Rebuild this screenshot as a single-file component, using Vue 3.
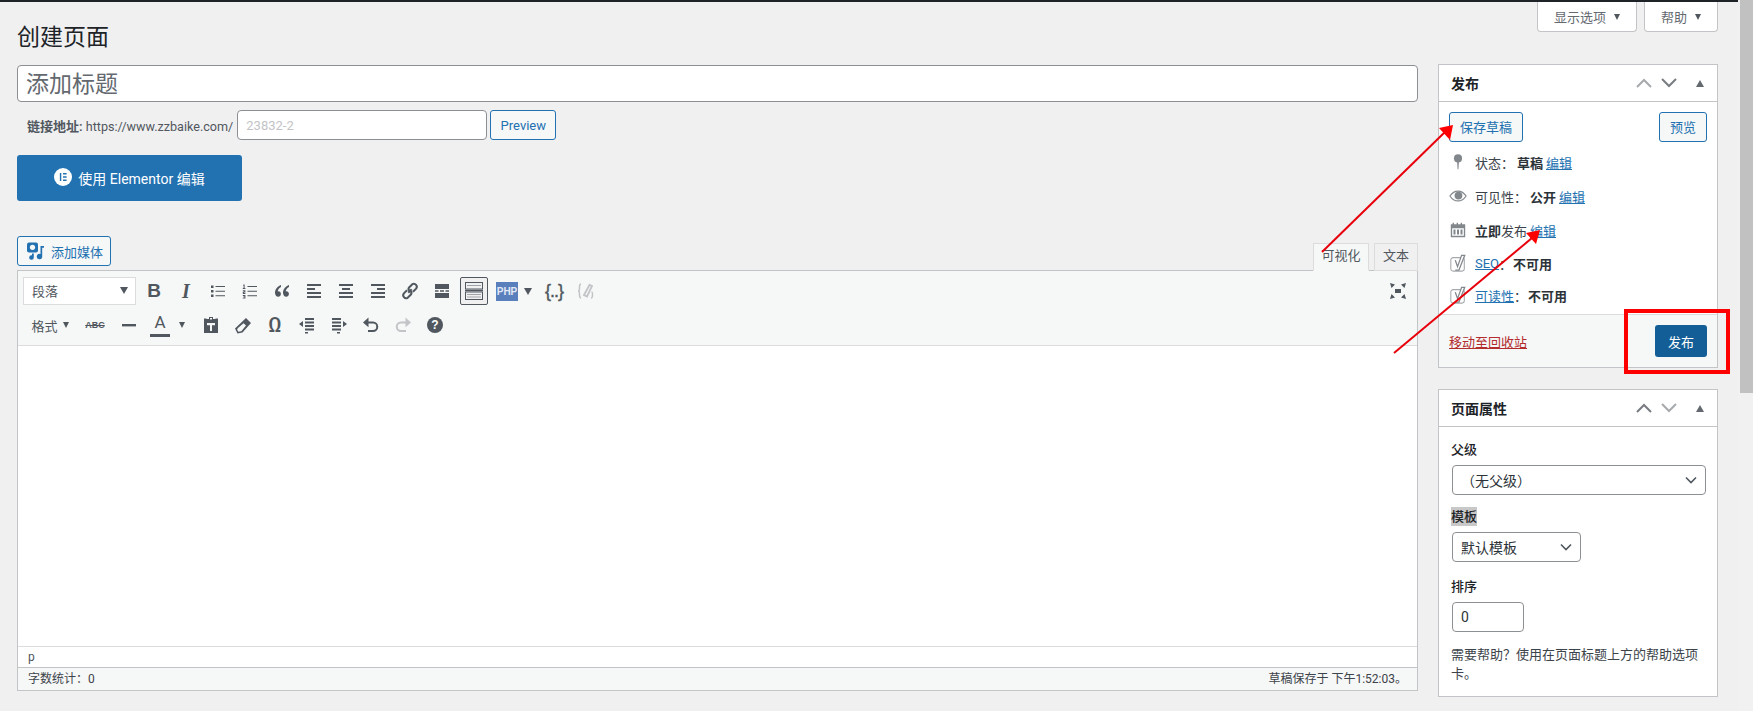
<script setup>
const rowOne = [
  { key: 'bullet', d: 'M3 4.500h2.500v2.500H3zM3 9h2.500v2.500H3zM3 13.500h2.500V16H3zM7.500 5h9.500v1H7.500zM7.500 9.700h9.500v1H7.500zM7.500 14.200h9.500v1H7.500z' },
  { key: 'num', d: 'M7.500 5h9.500v1H7.500zM7.500 9.700h9.500v1H7.500zM7.500 14.200h9.500v1H7.500zM3.400 3.400h1.200v3.600H5.400V8H2.800V7h.8V4.400h-.6zM2.800 9.300h2.600v2.200H4v.6h1.400V13H2.800v-2.200h1.400v-.6H2.800zM2.800 14h2.600v3.600H2.800v-.9h1.600v-.5H3.300v-.8h1.100v-.5H2.800z' },
  { key: 'quote', d: 'M9 4C5.800 5.200 3 8 3 11.800c0 2.400 1.300 3.900 3.100 3.900 1.600 0 2.800-1.200 2.800-2.800s-1.100-2.700-2.500-2.700c-.3 0-.5 0-.7.1.3-1.700 1.600-3.200 3.300-4.200zM17 4c-3.200 1.200-6 4-6 7.800 0 2.400 1.300 3.900 3.100 3.900 1.600 0 2.800-1.200 2.800-2.800s-1.100-2.700-2.500-2.700c-.3 0-.5 0-.7.1.3-1.700 1.600-3.200 3.300-4.200z' },
  { key: 'left', d: 'M3 3h14v2H3zM3 7h8v2H3zM3 11h14v2H3zM3 15h14v2H3z' },
  { key: 'center', d: 'M3 3h14v2H3zM6 7h8v2H6zM3 11h14v2H3zM3 15h14v2H3z' },
  { key: 'right', d: 'M3 3h14v2H3zM9 7h8v2H9zM3 11h14v2H3zM3 15h14v2H3z' },
  { key: 'link', stroke: 'M8.300 11.700l3.400-3.400M7 9.200l-3.100 3.100a3 3 0 0 0 3.800 4.500l3-3a3 3 0 0 0 0-3.900M13 10.800l3.100-3.100a3 3 0 0 0-3.800-4.500l-3 3a3 3 0 0 0 0 3.900' },
  { key: 'more', d: 'M3 3h14v5H3zM3 9.300h3.500v1.400H3zM8 9.300h4v1.400H8zM13.500 9.300H17v1.400h-3.500zM3 12h14v5H3z' },
]

const rowTwo = [
  { key: 'hr', d: 'M3 9h14v2.400H3z', shift: true },
  { key: 'color' },
  { key: 'paste', d: 'M8 2h4v2h2.500V3.400H17V18H3V3.400h2.500V4H8zM9 3v1.500h2V3zM6 8v2.200h3V16h2v-5.800h3V8z' },
  { key: 'eraser', d: 'M13 3l5 5-8.500 9.500-5 1-2.500-5zM5 13l-.9 1.600 1.200 2.200 3-.6L13 10.600l-2.400-2.400z' },
  { key: 'omega' },
  { key: 'outdent', d: 'M8 3h9v2H8zM8 6.500h9v2H8zM8 10h9v2H8zM8 13.500h9v2H8zM8 17h3v1.500H8zM2 9l4-3v6z' },
  { key: 'indent', d: 'M3 3h9v2H3zM3 6.500h9v2H3zM3 10h9v2H3zM3 13.500h9v2H3zM8 17h3v1.500H8zM18 9l-4-3v6z' },
  { key: 'undo', stroke: 'M5.500 7.500h6.500a4.200 4.200 0 0 1 0 8.500H7', d: 'M7.500 2.600v9.600L2 7.400z' },
  { key: 'redo', light: true, stroke: 'M14.500 7.500H8a4.200 4.200 0 0 0 0 8.500h5', d: 'M12.500 2.600v9.600L18 7.400z' },
  { key: 'help', help: true },
]

const statusRows = [
  { key: 'status', icon: 'pin', label: '状态：', value: '草稿', link: '编辑' },
  { key: 'visibility', icon: 'eye', label: '可见性：', value: '公开', link: '编辑' },
  { key: 'time', icon: 'calendar', strong: '立即', label: '发布', link: '编辑' },
]

const yoastRows = [
  { key: 'seo', title: 'SEO', value: '不可用' },
  { key: 'read', title: '可读性', value: '不可用' },
]
</script>

<template>
  <div class="shell">
    <div class="page">
      <div class="topbar"></div>
      <div class="columns">
        <main class="main-col">
          <h1 class="page-title">创建页面</h1>
          <input class="title-input" placeholder="添加标题" />

          <div class="permalink">
            <span class="perma-label"><b>链接地址:</b> <span class="perma-url">https://www.zzbaike.com/</span></span>
            <input class="slug-input" placeholder="23832-2" />
            <button class="btn slug-btn">Preview</button>
          </div>

          <button class="elementor-btn">
            <svg class="el-logo" viewBox="0 0 20 20" width="18" height="18">
              <circle cx="10" cy="10" r="10" fill="#fff" />
              <path d="M6.500 5.500h1.600v9H6.500zM10 5.500h4v1.600h-4zM10 9.200h4v1.600h-4zM10 12.900h4v1.600h-4z" fill="#2271b1" />
            </svg>
            使用 Elementor 编辑
          </button>

          <div class="editor-tools">
            <button class="btn media-btn">
              <svg viewBox="0 0 20 20" width="20" height="20" fill="#2271b1">
                <rect x="1" y="1.500" width="11" height="10" rx="2" />
                <circle cx="6.500" cy="6.300" r="2.600" fill="#f6f7f7" />
                <path d="M14.500 5H18v1.800h-1.800v8.700a2.700 2.700 0 1 1-1.700-2.500z" />
                <path d="M6 12.500h1.800v4a2.300 2.300 0 1 1-1.800-2.200z" />
              </svg>
              添加媒体
            </button>
            <div class="tabs">
              <span class="tab tab-active">可视化</span>
              <span class="tab tab-text">文本</span>
            </div>
          </div>

          <section class="editor">
            <div class="toolbar">
              <div class="tool-row">
                <div class="format-select">
                  <span>段落</span>
                  <i class="caret"></i>
                </div>
                <span class="tool glyph-b">B</span>
                <span class="tool glyph-i">I</span>
                <span v-for="icon in rowOne" :key="icon.key" class="tool">
                  <svg viewBox="0 0 20 20" width="20" height="20">
                    <path v-if="icon.d" :d="icon.d" fill="#50575e" />
                    <path v-if="icon.stroke" :d="icon.stroke" fill="none" stroke="#50575e" stroke-width="2" />
                  </svg>
                </span>
                <span class="tool tool-active">
                  <svg viewBox="0 0 20 20" width="20" height="20" fill="none" stroke="#50575e" stroke-width="1">
                    <rect x="1.500" y="1.500" width="17" height="6.500" />
                    <rect x="1.500" y="11" width="17" height="7.500" />
                    <path d="M1 9.500h18" stroke-width="1.500" />
                    <path d="M3.500 4.500h13M3.500 13.500h13M3.500 16h13" stroke-width="1.200" stroke-dasharray="1 1" />
                  </svg>
                </span>
                <span class="tool tool-php">
                  <span class="php-badge">PHP</span>
                  <i class="caret"></i>
                </span>
                <span class="tool glyph-brace">{..}</span>
                <span class="tool">
                  <svg viewBox="0 0 20 20" width="20" height="20" fill="none" stroke="#c3c4c7" stroke-width="1.500">
                    <path d="M5 3C3 3 3.600 6 3.400 8.500 3.300 10 2.400 10 2 10c.4 0 1.300 0 1.400 1.500.2 2.500-.4 5.500 1.600 5.500M15.500 11c1.200.2 1 1 1 2.500 0 2 0 3.500-1.500 3.500" />
                    <path d="M8 14l5.500-10 2.500 1-5 10.500z" stroke-width="1.800" />
                  </svg>
                </span>
                <span class="tool tool-end">
                  <svg viewBox="0 0 20 20" width="20" height="20" fill="#50575e">
                    <path d="M7 8h6v4H7zM2 2l5 1.500L3.500 7zM18 2l-1.500 5L13 3.500zM2 18l1.500-5L7 16.500zM18 18l-5-1.500 3.500-3.500z" />
                  </svg>
                </span>
              </div>

              <div class="tool-row">
                <span class="tool tool-format">格式<i class="caret small"></i></span>
                <span class="tool glyph-abc">ABC</span>
                <template v-for="icon in rowTwo" :key="icon.key">
                  <span v-if="icon.key === 'color'" class="tool tool-color">
                    <span class="color-a">A</span>
                    <i class="caret small"></i>
                  </span>
                  <span v-else-if="icon.key === 'omega'" class="tool glyph-omega">Ω</span>
                  <span v-else-if="icon.help" class="tool"><span class="help-dot">?</span></span>
                  <span v-else class="tool" :class="{ 'tool-shift': icon.shift }">
                    <svg viewBox="0 0 20 20" width="20" height="20">
                      <path v-if="icon.d" :d="icon.d" :fill="icon.light ? '#c3c4c7' : '#50575e'" />
                      <path v-if="icon.stroke" :d="icon.stroke" fill="none" :stroke="icon.light ? '#c3c4c7' : '#50575e'" stroke-width="2" />
                    </svg>
                  </span>
                </template>
              </div>
            </div>

            <div class="edit-area"></div>
            <div class="path-row">p</div>
            <div class="status-row">
              <span>字数统计：0</span>
              <span>草稿保存于 下午1:52:03。</span>
            </div>
          </section>
        </main>

        <aside class="side-col">
          <div class="screen-links">
            <span class="screen-link">显示选项<i class="caret small"></i></span>
            <span class="screen-link">帮助<i class="caret small"></i></span>
          </div>

          <section class="postbox">
            <header class="box-head">
              <h2>发布</h2>
              <div class="box-handles">
                <svg viewBox="0 0 16 10" width="16" height="10" fill="none" stroke="#a7aaad" stroke-width="2"><path d="M1 9l7-7 7 7" /></svg>
                <svg viewBox="0 0 16 10" width="16" height="10" fill="none" stroke="#787c82" stroke-width="2"><path d="M1 1l7 7 7-7" /></svg>
                <i class="caret up"></i>
              </div>
            </header>

            <div class="publish-body">
              <div class="publish-top">
                <button class="btn">保存草稿</button>
                <button class="btn">预览</button>
              </div>

              <div v-for="row in statusRows" :key="row.key" class="misc-row">
                <span class="misc-icon">
                  <svg v-if="row.icon === 'pin'" viewBox="0 0 20 20" width="20" height="20" fill="#82878c">
                    <circle cx="10" cy="6" r="4.500" />
                    <path d="M9 9h2l-.5 9h-1z" />
                  </svg>
                  <svg v-else-if="row.icon === 'eye'" viewBox="0 0 20 20" width="20" height="20">
                    <path d="M1 10c2.500-3.800 5.500-5.500 9-5.500s6.500 1.700 9 5.500c-2.500 3.800-5.500 5.500-9 5.500S3.500 13.800 1 10z" fill="none" stroke="#82878c" stroke-width="1.300" />
                    <circle cx="10.500" cy="9.500" r="4.300" fill="#82878c" />
                  </svg>
                  <svg v-else viewBox="0 0 20 20" width="20" height="20" fill="#82878c">
                    <path d="M2 3.500h2V2h1.500v1.500h3V2H10v1.500h3V2h1.500v1.500h3.500V18H2zM3.500 8v8.500h13V8zM5 9.500h2.200V15H5zM8.900 9.500h2.200V15H8.900zM12.800 9.500H15V15h-2.200z" fill-rule="evenodd" />
                  </svg>
                </span>
                <template v-if="row.strong"><b>{{ row.strong }}</b>{{ row.label }}</template>
                <template v-else>{{ row.label }}<b class="misc-value">{{ row.value }}</b></template>
                <a class="edit-link">{{ row.link }}</a>
              </div>

              <div v-for="row in yoastRows" :key="row.key" class="misc-row yoast-row">
                <span class="misc-icon">
                  <svg viewBox="0 0 20 20" width="20" height="20" fill="none" stroke="#a7aaad" stroke-width="1.200">
                    <rect x="2" y="4" width="15" height="15" rx="2.500" />
                    <path d="M7 7l2.500 7L14 1.500h3.500L11 18H7" stroke="#82878c" stroke-width="1.400" fill="#fff" />
                  </svg>
                </span>
                <a class="edit-link no-gap">{{ row.title }}</a>：<b class="yoast-value">{{ row.value }}</b>
              </div>
            </div>

            <footer class="major-actions">
              <a class="trash-link">移动至回收站</a>
              <button class="publish-btn">发布</button>
            </footer>
          </section>

          <section class="postbox attrs-box">
            <header class="box-head">
              <h2>页面属性</h2>
              <div class="box-handles">
                <svg viewBox="0 0 16 10" width="16" height="10" fill="none" stroke="#787c82" stroke-width="2"><path d="M1 9l7-7 7 7" /></svg>
                <svg viewBox="0 0 16 10" width="16" height="10" fill="none" stroke="#a7aaad" stroke-width="2"><path d="M1 1l7 7 7-7" /></svg>
                <i class="caret up"></i>
              </div>
            </header>
            <div class="attrs-body">
              <p class="attr-label">父级</p>
              <div class="field field-full">
                <span class="indent-value">（无父级）</span>
                <svg viewBox="0 0 12 8" width="12" height="8" fill="none" stroke="#50575e" stroke-width="1.600"><path d="M1 1.500l5 5 5-5" /></svg>
              </div>
              <p class="attr-label"><span class="selected-text">模板</span></p>
              <div class="field field-tpl">
                <span>默认模板</span>
                <svg viewBox="0 0 12 8" width="12" height="8" fill="none" stroke="#50575e" stroke-width="1.600"><path d="M1 1.500l5 5 5-5" /></svg>
              </div>
              <p class="attr-label">排序</p>
              <div class="field field-order">0</div>
              <p class="attr-help">需要帮助？使用在页面标题上方的帮助选项卡。</p>
            </div>
          </section>
        </aside>
      </div>
    </div>

    <div class="scroll-track"><div class="scroll-thumb"></div></div>

    <!-- annotations painted over the screenshot -->
    <svg class="annotations" viewBox="0 0 1753 711" width="1753" height="711">
      <path d="M1322 252L1446 131" stroke="#e8000b" stroke-width="2" fill="none" />
      <path d="M1453 125L1439 128L1450 140z" fill="#f00" />
      <path d="M1394 353L1532 238" stroke="#e8000b" stroke-width="2" fill="none" />
      <path d="M1540 230L1526 233L1536 244z" fill="#f00" />
      <rect x="1626" y="311" width="102" height="61" fill="none" stroke="#f00" stroke-width="4" />
    </svg>
  </div>
</template>

<style>
html,
body {
  margin: 0;
  overflow: hidden;
  background: #f0f0f1;
}
</style>

<style scoped>
.shell {
  position: relative;
  display: flex;
  width: 1753px;
  height: 711px;
  overflow: hidden;
  font-family: Roboto, "Noto Sans CJK SC", sans-serif;
  font-size: 13px;
  color: #3c434a;
  background: #f0f0f1;
}

.page {
  flex: 1;
  min-width: 0;
}

.topbar {
  height: 2px;
  background: #1d2327;
}

.columns {
  display: flex;
  align-items: flex-start;
  gap: 20px;
  padding-left: 17px;
}

.main-col {
  width: 1401px;
}

.side-col {
  width: 280px;
}

.page-title {
  margin: 0;
  padding-top: 21px;
  height: 42px;
  line-height: 30px;
  font-size: 23px;
  font-weight: 400;
  color: #1d2327;
}

.title-input {
  display: block;
  box-sizing: border-box;
  width: 100%;
  height: 37px;
  padding: 2px 8px 0;
  border: 1px solid #8c8f94;
  border-radius: 4px;
  font-family: inherit;
  font-size: 23px;
  background: #fff;
}

.title-input::placeholder {
  color: #646970;
}

.permalink {
  display: flex;
  align-items: center;
  height: 30px;
  margin: 8px 0 15px;
  padding-left: 10px;
  font-size: 13px;
  color: #50575e;
}

.perma-label b {
  font-weight: 600;
  color: #50575e;
}

.perma-url {
  font-size: 12.600px;
}

.slug-input {
  box-sizing: border-box;
  width: 250px;
  height: 30px;
  margin-left: 4px;
  padding: 0 8px;
  border: 1px solid #8c8f94;
  border-radius: 4px;
  font-family: inherit;
  font-size: 13px;
  background: #fff;
}

.slug-input::placeholder {
  color: #c3c4c7;
}

.btn {
  box-sizing: border-box;
  height: 30px;
  padding: 0 10px 2px;
  border: 1px solid #2271b1;
  border-radius: 3px;
  font-family: inherit;
  font-size: 13px;
  color: #2271b1;
  background: #f6f7f7;
}

.slug-btn {
  margin-left: 3px;
  width: 66px;
  padding: 0;
}

.elementor-btn {
  display: flex;
  align-items: center;
  justify-content: center;
  gap: 6px;
  width: 225px;
  height: 46px;
  border: 0;
  border-radius: 3px;
  font-family: inherit;
  font-size: 14px;
  color: #fff;
  background: #2271b1;
}

.el-logo {
  margin-top: -3px;
}

.editor-tools {
  display: flex;
  justify-content: space-between;
  align-items: flex-end;
  height: 34px;
  margin-top: 35px;
}

.media-btn {
  display: flex;
  align-items: center;
  gap: 5px;
  align-self: flex-start;
  width: 94px;
  height: 30px;
  padding: 0 0 0 8px;
}

.tabs {
  display: flex;
  gap: 5px;
  margin-bottom: -1px;
  position: relative;
  z-index: 1;
}

.tab {
  box-sizing: border-box;
  width: 44px;
  height: 28px;
  line-height: 24px;
  text-align: center;
  border: 1px solid #dcdcde;
  font-size: 13px;
  color: #50575e;
  background: #f0f0f1;
}

.tab-active {
  width: 56px;
  border-color: #dcdcde #dcdcde #f6f7f7;
  background: #f6f7f7;
}

.editor {
  display: flex;
  flex-direction: column;
  box-sizing: border-box;
  height: 421px;
  border: 1px solid #c3c4c7;
  background: #fff;
}

.toolbar {
  box-sizing: border-box;
  height: 75px;
  padding: 6px 5px 0;
  border-bottom: 1px solid #dcdcde;
  background: #f6f7f7;
}

.tool-row {
  display: flex;
  align-items: center;
  gap: 4px;
  height: 28px;
  margin-bottom: 6px;
}

.tool {
  display: flex;
  align-items: center;
  justify-content: center;
  box-sizing: border-box;
  width: 28px;
  height: 28px;
  color: #50575e;
}

.format-select {
  display: flex;
  align-items: center;
  justify-content: space-between;
  box-sizing: border-box;
  width: 113px;
  height: 28px;
  padding: 0 7px 2px 8px;
  border: 1px solid #dcdcde;
  font-size: 13px;
  color: #50575e;
  background: #fff;
}

.caret {
  display: inline-block;
  width: 0;
  height: 0;
  border-left: 4px solid transparent;
  border-right: 4px solid transparent;
  border-top: 7px solid #50575e;
}

.caret.small {
  border-left-width: 3.500px;
  border-right-width: 3.500px;
  border-top-width: 6px;
}

.caret.up {
  border-top: 0;
  border-bottom: 7px solid #646970;
}

.glyph-b {
  font-family: "Liberation Sans", sans-serif;
  font-size: 19px;
  font-weight: 700;
}

.glyph-i {
  font-family: "Liberation Serif", serif;
  font-size: 20px;
  font-weight: 700;
  font-style: italic;
}

.tool-active {
  border: 1px solid #50575e;
  border-radius: 2px;
  background: #f0f0f1;
}

.tool-php {
  gap: 6px;
  width: 44px;
}

.php-badge {
  width: 22px;
  height: 19px;
  line-height: 19px;
  text-align: center;
  font-family: "Liberation Sans", sans-serif;
  font-size: 10px;
  font-weight: 700;
  color: #e3e8f5;
  background: #5a7fbd;
}

.glyph-brace {
  font-family: "Liberation Sans", sans-serif;
  font-size: 18px;
  letter-spacing: -1px;
  -webkit-text-stroke: 0.4px #50575e;
}

.tool-end {
  margin-left: auto;
}

.tool-format {
  gap: 5px;
  width: 54px;
  font-size: 13px;
}

.glyph-abc {
  font-family: "Liberation Sans", sans-serif;
  font-size: 9px;
  font-weight: 700;
  text-decoration: line-through;
}

.tool-shift {
  margin-left: 2px;
}

.tool-color {
  justify-content: flex-start;
  gap: 9px;
  width: 46px;
  padding-left: 3px;
}

.color-a {
  width: 20px;
  height: 21px;
  line-height: 18px;
  text-align: center;
  border-bottom: 3px solid #50575e;
  font-size: 17px;
}

.glyph-omega {
  font-size: 20px;
  font-weight: 500;
}

.help-dot {
  width: 16px;
  height: 16px;
  line-height: 16px;
  border-radius: 50%;
  text-align: center;
  font-family: "Liberation Sans", sans-serif;
  font-size: 12px;
  font-weight: 700;
  color: #fff;
  background: #50575e;
}

.edit-area {
  flex: 1;
}

.path-row {
  box-sizing: border-box;
  height: 21px;
  padding-left: 10px;
  line-height: 20px;
  border-top: 1px solid #dcdcde;
  font-size: 12px;
  color: #50575e;
}

.status-row {
  display: flex;
  justify-content: space-between;
  box-sizing: border-box;
  height: 23px;
  padding: 0 10px;
  line-height: 23px;
  border-top: 1px solid #c3c4c7;
  font-size: 12px;
  color: #3c434a;
  background: #f6f7f7;
}

.screen-links {
  display: flex;
  justify-content: flex-end;
  gap: 7px;
  height: 30px;
  margin-bottom: 32px;
}

.screen-link {
  display: flex;
  align-items: center;
  justify-content: center;
  gap: 8px;
  box-sizing: border-box;
  height: 30px;
  padding: 0 16px;
  border: 1px solid #c3c4c7;
  border-top: 0;
  border-radius: 0 0 4px 4px;
  font-size: 13px;
  color: #646970;
  background: #fff;
}

.postbox {
  box-sizing: border-box;
  border: 1px solid #c3c4c7;
  background: #fff;
}

.box-head {
  display: flex;
  align-items: center;
  justify-content: space-between;
  box-sizing: border-box;
  height: 37px;
  padding: 0 13px 0 12px;
  border-bottom: 1px solid #c3c4c7;
}

.box-head h2 {
  margin: 0;
  font-size: 14px;
  font-weight: 600;
  color: #1d2327;
}

.box-handles {
  display: flex;
  align-items: center;
  gap: 9px;
}

.box-handles .caret {
  margin-left: 10px;
}

.publish-body {
  padding: 10px 10px 0;
  height: 212px;
  box-sizing: border-box;
}

.publish-top {
  display: flex;
  justify-content: space-between;
  margin-bottom: 3px;
}

.misc-row {
  display: flex;
  align-items: center;
  height: 34px;
  font-size: 13px;
  color: #3c434a;
}

.yoast-row {
  height: 32px;
}

.misc-icon {
  display: flex;
  justify-content: center;
  width: 18px;
  margin-right: 8px;
}

.misc-row b {
  font-weight: 600;
  color: #2c3338;
}

.misc-value {
  margin-left: 3px;
}

.yoast-value {
  margin-left: 1px;
}

.edit-link {
  margin-left: 3px;
  color: #2271b1;
  text-decoration: underline;
}

.edit-link.no-gap {
  margin-left: 0;
}

.major-actions {
  display: flex;
  align-items: center;
  justify-content: space-between;
  box-sizing: border-box;
  height: 53px;
  padding: 0 10px;
  border-top: 1px solid #dcdcde;
  background: #f6f7f7;
}

.trash-link {
  color: #b32d2e;
  text-decoration: underline;
}

.publish-btn {
  width: 52px;
  height: 32px;
  border: 0;
  border-radius: 3px;
  font-family: inherit;
  font-size: 13px;
  color: #fff;
  background: #135e96;
}

.attrs-box {
  height: 308px;
  margin-top: 21px;
}

.attrs-body {
  padding: 13px 12px 0 12px;
}

.attr-label {
  margin: 0 0 6px;
  height: 19px;
  line-height: 19px;
  font-size: 13px;
  font-weight: 500;
  color: #1d2327;
}

.selected-text {
  display: inline-block;
  background: #c8c8c8;
}

.field {
  display: flex;
  align-items: center;
  justify-content: space-between;
  box-sizing: border-box;
  height: 30px;
  margin: 0 0 12px 1px;
  padding: 0 8px;
  border: 1px solid #8c8f94;
  border-radius: 4px;
  font-size: 14px;
  color: #2c3338;
  background: #fff;
}

.field-full {
  width: 254px;
}

.field-tpl {
  width: 129px;
  margin-bottom: 15px;
}

.field-order {
  width: 72px;
}

.attr-help {
  margin: 13px 0 0;
  line-height: 19px;
  font-size: 13px;
  color: #3c434a;
}

.scroll-track {
  width: 15px;
  flex: none;
  padding-left: 2px;
  box-sizing: border-box;
  background: #f1f1f1;
}

.scroll-thumb {
  height: 393px;
  background: #c1c1c1;
}

.annotations {
  position: absolute;
  top: 0;
  left: 0;
  z-index: 2;
  pointer-events: none;
}
</style>
